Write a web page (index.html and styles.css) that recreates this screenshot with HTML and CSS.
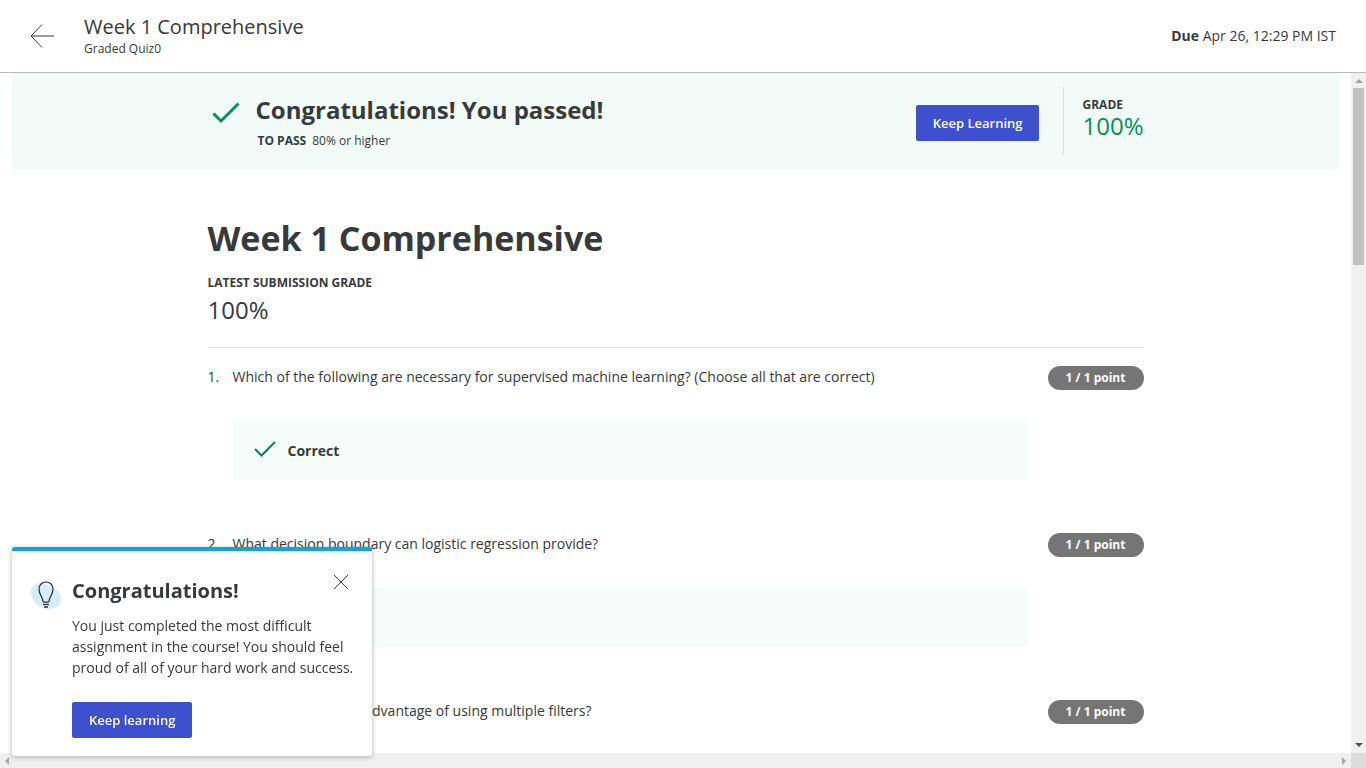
FILE: index.html
```html
<!DOCTYPE html>
<html lang="en">
<head>
<meta charset="utf-8">
<title>Week 1 Comprehensive</title>
<link rel="stylesheet" href="styles.css">
</head>
<body>
<header class="topbar">
  <a class="back" href="#" aria-label="Back">
    <svg width="24" height="24" viewBox="0 0 24 24" fill="none" stroke="#373a3c" stroke-width="1"><path d="M24 12H1M12 .5L1 12L12 23.500"/></svg>
  </a>
  <div class="heading">
    <div class="heading-title">Week 1 Comprehensive</div>
    <div class="heading-sub">Graded Quiz0</div>
  </div>
  <div class="due"><strong>Due</strong> Apr 26, 12:29 PM IST</div>
</header>
<div class="viewport">
  <main class="content">
    <section class="banner">
      <div class="column banner-row">
        <svg class="banner-check" width="28" height="22" viewBox="0 0 28 22" fill="none" stroke="#00935a" stroke-width="3"><path d="M1.500 11.500L9 19L26.500 1.500"/></svg>
        <div class="banner-text">
          <h2>Congratulations! You passed!</h2>
          <p><strong>TO PASS</strong><span>80% or higher</span></p>
        </div>
        <button class="primary" type="button">Keep Learning</button>
        <div class="grade">
          <div class="label">GRADE</div>
          <div class="grade-value">100%</div>
        </div>
      </div>
    </section>
    <div class="column">
      <h1>Week 1 Comprehensive</h1>
      <div class="label">LATEST SUBMISSION GRADE</div>
      <div class="latest">100%</div>
      <section class="questions">
        <article class="question">
          <span>1.</span>
          <p>Which of the following are necessary for supervised machine learning? (Choose all that are correct)</p>
          <span class="pill">1 / 1 point</span>
          <div class="feedback">
            <svg width="22" height="18" viewBox="0 0 22 18" fill="none" stroke="#00865a" stroke-width="2"><path d="M1 9L7.500 15.500L21 2"/></svg>
            <strong>Correct</strong>
          </div>
        </article>
        <article class="question">
          <span>2.</span>
          <p>What decision boundary can logistic regression provide?</p>
          <span class="pill">1 / 1 point</span>
          <div class="feedback">
            <svg width="22" height="18" viewBox="0 0 22 18" fill="none" stroke="#00865a" stroke-width="2"><path d="M1 9L7.500 15.500L21 2"/></svg>
            <strong>Correct</strong>
          </div>
        </article>
        <article class="question">
          <span>3.</span>
          <p>What is the primary advantage of using multiple filters?</p>
          <span class="pill">1 / 1 point</span>
        </article>
      </section>
    </div>
  </main>
  <div class="vbar" aria-hidden="true"><i class="tri up"></i><i class="thumb"></i><i class="tri down"></i></div>
  <div class="hbar" aria-hidden="true"><i class="tri left"></i><i class="tri right"></i></div>
  <div class="corner"></div>
</div>
<aside class="toast">
  <svg class="bulb" width="30" height="30" viewBox="0 0 30 30" fill="none">
    <path fill="#d4edf9" d="M0 12C0 6 4 2 10 2C15 2 17 5 21 7C26 9 30 11 30 18C30 24 26 28 18 28C9 28 0 20 0 12Z"/>
    <g stroke="#2b2d2f" stroke-width="1.200"><path d="M12 20.500C12 16 8 14 8 8C8 4 11 1 15 1C19 1 22 4 22 8C22 14 18 16 18 20.500C18 21.500 12 21.500 12 20.500Z"/><path d="M12 23.500H18"/><path stroke="#000" d="M13 26H17"/></g>
  </svg>
  <div class="toast-body">
    <h3>Congratulations!</h3>
    <p>You just completed the most difficult assignment in the course! You should feel proud of all of your hard work and success.</p>
    <button class="primary" type="button">Keep learning</button>
  </div>
  <button class="close" type="button" aria-label="Close"><svg width="16" height="16" viewBox="0 0 16 16" stroke="#373a3c"><path d="M1 1L15 15M15 1L1 15"/></svg></button>
</aside>
</body>
</html>
```
FILE: styles.css
```css
* { box-sizing: border-box; }
body {
  margin: 0;
  height: 100vh;
  display: flex;
  flex-direction: column;
  overflow: hidden;
  background: #fff;
  color: #373a3c;
  font: 14px/21px "Open Sans", "Noto Sans", sans-serif;
}
h1, h2, h3, p { margin: 0; }
svg { display: block; flex: none; }

.topbar {
  flex: none;
  display: flex;
  align-items: center;
  height: 73px;
  padding: 0 30px;
  border-bottom: 1px solid #b8b8b8;
}
.heading { margin-left: 30px; flex: 1; }
.heading-title { font-size: 20px; line-height: 26px; }
.heading-sub { font-size: 12px; line-height: 18px; }
.due { line-height: 20px; padding-bottom: 1px; }

.viewport {
  flex: 1;
  min-height: 0;
  display: grid;
  grid-template: minmax(0, 1fr) 15px / minmax(0, 1fr) 15px;
}
.content { overflow: hidden; }
.column { width: 936px; max-width: 100%; margin: 0 auto; }

.banner { margin: 0 12px; padding: 14px 0; background: #f2fbf8; }
.banner-row { display: flex; align-items: center; }
.banner-check { margin: 0 16px 16px 4px; }
.banner-text { flex: 1; }
.banner-text h2 { font-size: 24px; line-height: 36px; }
.banner-text p { margin: 4px 0 0 2px; font-size: 12px; line-height: 18px; }
.banner-text span { margin-left: 6px; }
.primary {
  height: 36px;
  padding: 0 17px;
  border: 0;
  border-radius: 2px;
  background: #3d50cd;
  color: #fff;
  font: 600 13px/20px "Open Sans", "Noto Sans", sans-serif;
}
.banner .primary { margin: 4px 24px 0 0; }
.grade {
  height: 68px;
  padding: 9px 0 0 18px;
  border-left: 1px solid #ddd;
}
.label { font-size: 12px; line-height: 18px; font-weight: 700; }
.grade-value { font-size: 24px; line-height: 24px; color: #00935a; }

h1 { margin-top: 45px; font-size: 34px; line-height: 48px; }
h1 + .label { margin-top: 12px; }
.latest { font-size: 24px; line-height: 36px; }
.questions { margin-top: 19px; padding-top: 18px; border-top: 1px solid #ddd; }
.question {
  display: grid;
  grid-template-columns: 25px minmax(0, 1fr) 96px;
  row-gap: 31px;
  margin-bottom: 53px;
}
.pill {
  height: 24px;
  border-radius: 12px;
  background: #757575;
  color: #fff;
  font-size: 12px;
  line-height: 24px;
  font-weight: 700;
  text-align: center;
}
.feedback {
  grid-column: 2;
  display: flex;
  align-items: center;
  gap: 12px;
  height: 59px;
  margin-right: 20px;
  padding: 0 21px;
  background: #f5fcfa;
}
.feedback svg { margin-bottom: 4px; }

.vbar {
  display: flex;
  flex-direction: column;
  align-items: center;
  padding: 6px 0;
  background: #f0f0f0;
}
.thumb { width: 11px; height: 177px; margin-top: 5px; background: #c1c1c1; }
.hbar {
  display: flex;
  justify-content: space-between;
  align-items: center;
  padding: 0 5px;
  background: #f0f0f0;
}
.corner { background: #dcdcdc; }
.tri { border: 4px solid transparent; }
.up { border-top: 0; border-bottom-color: #a3a3a3; }
.down { margin-top: auto; border-bottom: 0; border-top-color: #505050; }
.left { border-left: 0; border-right-color: #a3a3a3; }
.right { border-right: 0; border-left-color: #a3a3a3; }

.toast {
  position: fixed;
  left: 12px;
  bottom: 12px;
  width: 360px;
  display: flex;
  gap: 11px;
  padding: 28px 18px 18px 19px;
  border-top: 4px solid #0ea5dc;
  border-radius: 3px;
  background: #fff;
  box-shadow: 0 1px 5px rgba(0, 0, 0, .3);
}
.bulb { margin-top: 2px; }
.toast-body { flex: 1; }
.toast h3 { font-size: 20px; line-height: 24px; }
.toast p { margin: 12px 0 24px; }
.close {
  position: absolute;
  top: 23px;
  right: 23px;
  padding: 0;
  border: 0;
  background: none;
}
```
